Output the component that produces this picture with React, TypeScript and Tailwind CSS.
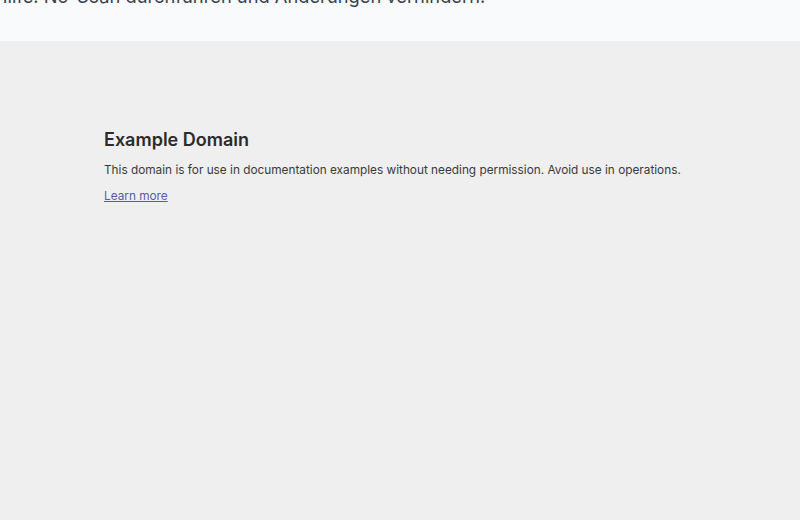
export default function App() {
  return (
    <div className="min-h-[520px] h-[520px] flex flex-col bg-[#efefef] overflow-hidden" style={{ fontFamily: 'Inter, "Noto Sans", sans-serif' }}>
      <div className="h-[42px] shrink-0 bg-[#f9fafc] border-b border-[#eceef1] overflow-hidden">
        <p className="-mt-[16px] -ml-[6px] text-[18.3px] leading-6 text-[#3a3f4b] whitespace-nowrap">
          Hilfe: No-Scan durchführen und Änderungen verhindern.
        </p>
      </div>
      <div className="pt-[86px] pl-[104px]">
        <h1 className="text-[18px] leading-6 font-semibold text-[#2b2b2b]">Example Domain</h1>
        <p className="mt-[10px] text-[11.8px] leading-4 text-[#3a3a3a]">
          This domain is for use in documentation examples without needing permission. Avoid use in operations.
        </p>
        <a href="#" className="mt-[10px] inline-block text-[11.8px] leading-4 text-[#5a5aa8] underline">
          Learn more
        </a>
      </div>
    </div>
  );
}
